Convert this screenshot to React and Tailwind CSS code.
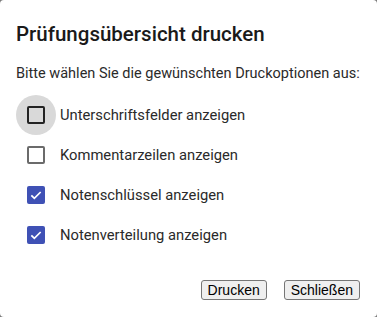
import { useState } from "react";

const options = [
  { id: "sig", label: "Unterschriftsfelder anzeigen", checked: false, focus: true },
  { id: "comments", label: "Kommentarzeilen anzeigen", checked: false },
  { id: "key", label: "Notenschlüssel anzeigen", checked: true },
  { id: "dist", label: "Notenverteilung anzeigen", checked: true },
];

function Checkbox({ checked, focus, onChange }) {
  return (
    <span
      className={`flex h-10 w-10 items-center justify-center rounded-full ${
        focus ? "bg-[#d9d9d9]" : ""
      }`}
    >
      <button
        type="button"
        onClick={onChange}
        className={`flex h-[18px] w-[18px] items-center justify-center rounded-[2px] ${
          checked
            ? "bg-[#3f51b5]"
            : focus
            ? "border-2 border-[#222222]"
            : "border-2 border-[#6b6b6b]"
        }`}
      >
        {checked && (
          <svg viewBox="0 0 24 24" className="h-[16px] w-[16px]" fill="none">
            <path d="M5 12.5l4.5 4.5L19 7.5" stroke="white" strokeWidth="2.6" />
          </svg>
        )}
      </button>
    </span>
  );
}

export default function App() {
  const [state, setState] = useState(options);

  const toggle = (id) =>
    setState((prev) =>
      prev.map((o) => (o.id === id ? { ...o, checked: !o.checked } : o)),
    );

  return (
    <div className="h-[317px] w-[377px] bg-[#7a7a7a]">
      <div className="flex h-full w-full flex-col rounded-[4px] bg-white font-['Roboto',sans-serif] text-[#202020]">
        <h2 className="px-4 pt-[18px] text-[20.5px] font-medium leading-8 text-[#1a1a1a]">
          Prüfungsübersicht drucken
        </h2>
        <p className="whitespace-nowrap px-4 pt-[12px] text-[14.5px] leading-6 text-[#2a2a2a]">
          Bitte wählen Sie die gewünschten Druckoptionen aus:
        </p>
        <div className="flex flex-col pl-[16px] pt-[9px]">
          {state.map((o) => (
            <label key={o.id} className="flex h-10 items-center gap-1 cursor-pointer">
              <Checkbox checked={o.checked} focus={o.focus} onChange={() => toggle(o.id)} />
              <span className="text-[14.75px] text-[#2a2a2a]">{o.label}</span>
            </label>
          ))}
        </div>
        <div className="mt-auto flex justify-end gap-[17px] pl-4 pr-[17px] pb-[17px]">
          <button
            type="button"
            className="h-[20px] rounded-[3px] border border-[#767676] bg-[#efefef] px-[6px] font-['Liberation_Sans',Arial,sans-serif] text-[14px] leading-none text-black"
          >
            Drucken
          </button>
          <button
            type="button"
            className="h-[20px] rounded-[3px] border border-[#767676] bg-[#efefef] px-[6px] font-['Liberation_Sans',Arial,sans-serif] text-[14px] leading-none text-black"
          >
            Schließen
          </button>
        </div>
      </div>
    </div>
  );
}
